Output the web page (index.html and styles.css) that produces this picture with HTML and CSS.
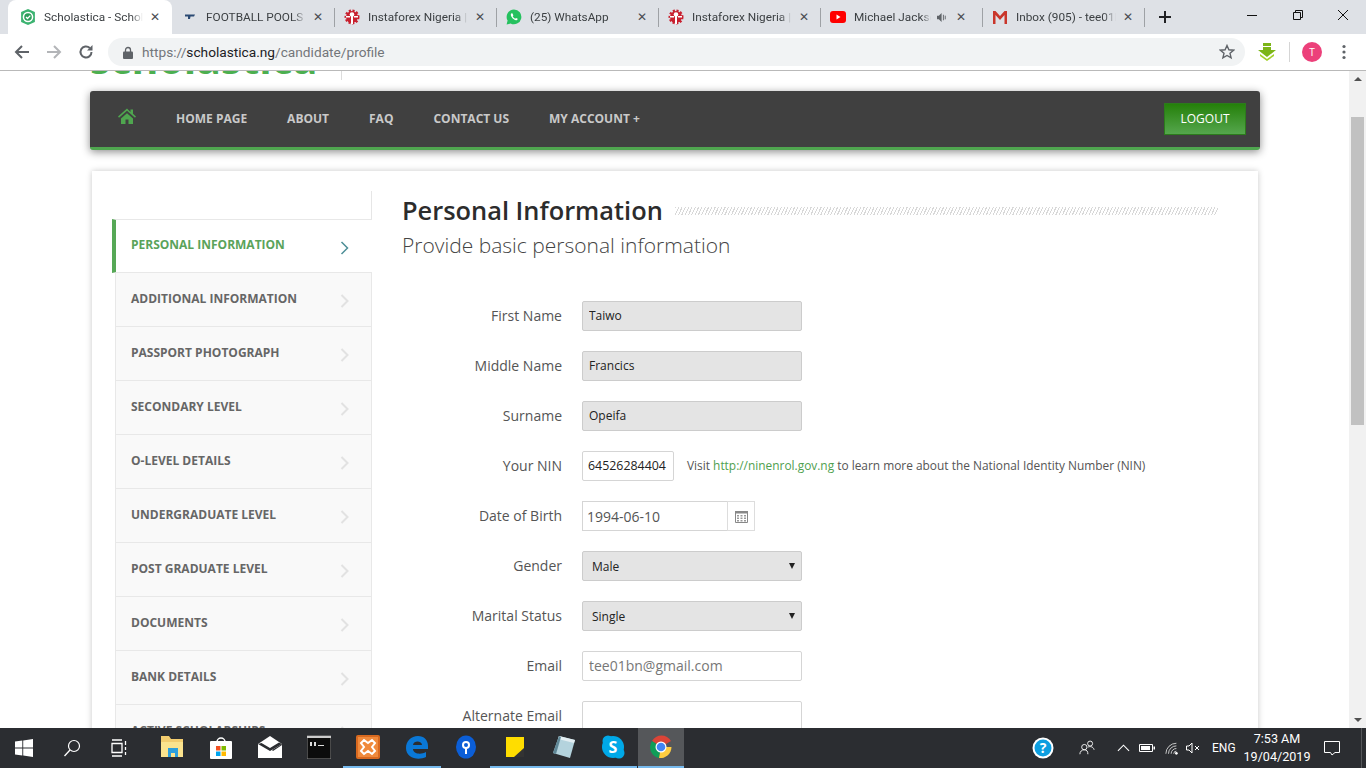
FILE: index.html
```html
<!DOCTYPE html>
<html lang="en">
<head>
<meta charset="utf-8">
<title>Scholastica - Scholarship Portal</title>
<link rel="stylesheet" href="styles.css">
</head>
<body>
<div class="tabstrip">
  <div class="tab active">
    <svg class="fav" viewBox="0 0 16 16"><path d="M8 0l6.900 3v10L8 16l-6.900-3V3z" fill="#3cb371"/><circle cx="8" cy="8" r="5.300" fill="#fff"/><circle cx="8" cy="8" r="3.800" fill="#2e9e5b"/><path d="M6 8l1.500 1.500L10.300 6.600" fill="none" stroke="#fff" stroke-width="1.300"/></svg>
    <span class="tab-title">Scholastica - Scholarship</span><span class="tab-x">✕</span>
  </div>
  <div class="tab">
    <svg class="fav" viewBox="0 0 16 16"><path d="M3 5.500h10l-1 2H8.500L8 10H6V7.500H3z" fill="#2b4a73"/></svg>
    <span class="tab-title">FOOTBALL POOLS FIXTURES</span><span class="tab-x">✕</span>
  </div>
  <div class="tab sep">
    <svg class="fav" viewBox="0 0 16 16"><circle cx="8" cy="8" r="6" fill="#c8202f" stroke="#c8202f" stroke-width="3" stroke-dasharray="2 1.500"/><circle cx="8" cy="5.500" r="2.300" fill="#fff"/><path d="M7 7h2v8H7zM2 7h4v1.600H2zM10 7h4v1.600h-4z" fill="#fff"/></svg>
    <span class="tab-title">Instaforex Nigeria | Forex</span><span class="tab-x">✕</span>
  </div>
  <div class="tab sep">
    <svg class="fav" viewBox="0 0 16 16"><path d="M8 .500a7.400 7.400 0 0 0-6.400 11.100L.600 15.500l4-1A7.400 7.400 0 1 0 8 .500z" fill="#25c15f"/><path d="M5.500 4.300c-1 .700-1 2.200.300 4 1.300 1.900 3.300 3.200 4.700 2.900.800-.200 1.300-.800 1.200-1.400l-1.700-.900-.800.800c-1-.400-2-1.400-2.500-2.500l.700-.800-.800-1.800z" fill="#fff"/></svg>
    <span class="tab-title">(25) WhatsApp</span><span class="tab-x">✕</span>
  </div>
  <div class="tab sep">
    <svg class="fav" viewBox="0 0 16 16"><circle cx="8" cy="8" r="6" fill="#c8202f" stroke="#c8202f" stroke-width="3" stroke-dasharray="2 1.500"/><circle cx="8" cy="5.500" r="2.300" fill="#fff"/><path d="M7 7h2v8H7zM2 7h4v1.600H2zM10 7h4v1.600h-4z" fill="#fff"/></svg>
    <span class="tab-title">Instaforex Nigeria | Forex</span><span class="tab-x">✕</span>
  </div>
  <div class="tab sep">
    <svg class="fav" viewBox="0 0 16 16"><rect y="2" width="16" height="12" rx="3" fill="#f00"/><path d="M6.500 5.500v5l4-2.500z" fill="#fff"/></svg>
    <span class="tab-title short">Michael Jackson - Thriller</span>
    <svg class="speaker" viewBox="0 0 12 12"><path d="M0 4h2l3-3v10L2 8H0z" fill="#5f6368"/><path d="M7 3v6M9 4v4" stroke="#5f6368" fill="none"/></svg>
    <span class="tab-x">✕</span>
  </div>
  <div class="tab sep">
    <svg class="fav" viewBox="0 0 16 16"><path d="M1 2h2.500L8 7l4.500-5H15v13h-2.500V6L8 11 3.500 6v9H1z" fill="#c9362b"/></svg>
    <span class="tab-title">Inbox (905) - tee01bn@gmail</span><span class="tab-x">✕</span>
  </div>
  <div class="tab-end">
    <svg class="newtab" viewBox="0 0 14 14"><path d="M7 1v12M1 7h12" stroke="#202124" stroke-width="2"/></svg>
  </div>
  <div class="winctl">
    <svg viewBox="0 0 12 12"><path d="M1 6.500h10" stroke="#111"/></svg>
    <svg viewBox="0 0 12 12"><path d="M1.500 3.500h7v7h-7zM3.500 3.500v-2h7v7h-2" fill="none" stroke="#111"/></svg>
    <svg viewBox="0 0 12 12"><path d="M1 1l10 10M11 1L1 11" stroke="#111"/></svg>
  </div>
</div>

<div class="toolbar">
  <svg class="tool" viewBox="0 0 16 16"><path d="M15 8H2.500M8 2L2 8l6 6" fill="none" stroke="#5f6368" stroke-width="2"/></svg>
  <svg class="tool" viewBox="0 0 16 16"><path d="M1 8h12.500M8 2l6 6-6 6" fill="none" stroke="#b3b5b8" stroke-width="2"/></svg>
  <svg class="tool" viewBox="0 0 16 16"><path d="M13.500 8a5.500 5.500 0 1 1-1.700-4" fill="none" stroke="#5f6368" stroke-width="2"/><path d="M14.500 1v5.500H9z" fill="#5f6368"/></svg>
  <div class="omnibox">
    <svg class="lock" viewBox="0 0 10 13"><path d="M2.500 6V4a2.500 2.500 0 0 1 5 0v2" fill="none" stroke="#5f6368" stroke-width="1.300"/><rect y="5.500" width="10" height="7.500" rx="1" fill="#5f6368"/></svg>
    <span class="url"><span class="url-dim">https://</span>scholastica.ng<span class="url-dim">/candidate/profile</span></span>
    <svg class="star" viewBox="0 0 16 16"><path d="M8 1.500l1.900 4.300 4.700.400-3.600 3.100 1.100 4.600L8 11.500l-4.100 2.400L5 9.300 1.400 6.200l4.700-.400z" fill="none" stroke="#5f6368" stroke-width="1.400"/></svg>
  </div>
  <div class="ext">
    <svg class="ext-arrow" viewBox="0 0 18 18"><path d="M5 0h8v3H5zM5 4h8v3h5l-9 7-9-7h5z" fill="#7cb518"/><path d="M2 11l7 5 7-5v2l-7 5-7-5z" fill="#a3d129"/></svg>
    <i class="ext-sep"></i>
    <span class="avatar">T</span>
    <svg class="dots" viewBox="0 0 4 16"><circle cx="2" cy="2.500" r="1.600"/><circle cx="2" cy="8" r="1.600"/><circle cx="2" cy="13.500" r="1.600"/></svg>
  </div>
</div>

<div class="viewport">
  <div class="page">
    <div class="site-head">
      <div class="logo">scholastica</div>
      <i class="logo-sep"></i>
    </div>
    <nav class="mainnav">
      <svg class="home" viewBox="0 0 18 16"><path d="M9 .500L0 8.500l1 1.200L9 2.800l8 6.900 1-1.200-3-2.700V1.500h-2.500v2.500zM3 10.500V16h4.500v-4.500h3V16H15v-5.500L9 5.200z" fill="#4fa64f"/></svg>
      <a>HOME PAGE</a><a>ABOUT</a><a>FAQ</a><a>CONTACT US</a><a>MY ACCOUNT +</a>
      <button class="logout">LOGOUT</button>
    </nav>
    <div class="card">
      <aside class="side">
        <div class="side-top"></div>
        <div class="side-item on">PERSONAL INFORMATION<svg class="chev" viewBox="0 0 10 14"><path d="M1.500 1l6 6-6 6" fill="none" stroke="#4e8f97" stroke-width="1.500"/></svg></div>
        <div class="side-item">ADDITIONAL INFORMATION<svg class="chev" viewBox="0 0 10 14"><path d="M1.500 1l6 6-6 6" fill="none" stroke="#e2e2e2" stroke-width="2"/></svg></div>
        <div class="side-item">PASSPORT PHOTOGRAPH<svg class="chev" viewBox="0 0 10 14"><path d="M1.500 1l6 6-6 6" fill="none" stroke="#e2e2e2" stroke-width="2"/></svg></div>
        <div class="side-item">SECONDARY LEVEL<svg class="chev" viewBox="0 0 10 14"><path d="M1.500 1l6 6-6 6" fill="none" stroke="#e2e2e2" stroke-width="2"/></svg></div>
        <div class="side-item">O-LEVEL DETAILS<svg class="chev" viewBox="0 0 10 14"><path d="M1.500 1l6 6-6 6" fill="none" stroke="#e2e2e2" stroke-width="2"/></svg></div>
        <div class="side-item">UNDERGRADUATE LEVEL<svg class="chev" viewBox="0 0 10 14"><path d="M1.500 1l6 6-6 6" fill="none" stroke="#e2e2e2" stroke-width="2"/></svg></div>
        <div class="side-item">POST GRADUATE LEVEL<svg class="chev" viewBox="0 0 10 14"><path d="M1.500 1l6 6-6 6" fill="none" stroke="#e2e2e2" stroke-width="2"/></svg></div>
        <div class="side-item">DOCUMENTS<svg class="chev" viewBox="0 0 10 14"><path d="M1.500 1l6 6-6 6" fill="none" stroke="#e2e2e2" stroke-width="2"/></svg></div>
        <div class="side-item">BANK DETAILS<svg class="chev" viewBox="0 0 10 14"><path d="M1.500 1l6 6-6 6" fill="none" stroke="#e2e2e2" stroke-width="2"/></svg></div>
        <div class="side-item">ACTIVE SCHOLARSHIPS<svg class="chev" viewBox="0 0 10 14"><path d="M1.500 1l6 6-6 6" fill="none" stroke="#e2e2e2" stroke-width="2"/></svg></div>
      </aside>
      <main class="main">
        <div class="title-row"><h1>Personal Information</h1><i class="hatch"></i></div>
        <p class="sub">Provide basic personal information</p>
        <form class="form">
          <div class="row"><label>First Name</label><input class="in ro" value="Taiwo" disabled></div>
          <div class="row"><label>Middle Name</label><input class="in ro" value="Francics" disabled></div>
          <div class="row"><label>Surname</label><input class="in ro" value="Opeifa" disabled></div>
          <div class="row"><label>Your NIN</label><input class="in nin" value="64526284404"><span class="help">Visit <a>http://ninenrol.gov.ng</a> to learn more about the National Identity Number (NIN)</span></div>
          <div class="row"><label>Date of Birth</label><div class="dategroup"><input class="in date" value="1994-06-10"><span class="addon"><svg viewBox="0 0 13 14"><path d="M.500 2.500h12v11H.500z" fill="#fff" stroke="#888"/><path d="M0 2h13v2.500H0z" fill="#888"/><path d="M2 6h2v1.500H2zM5.500 6h2v1.500h-2zM9 6h2v1.500H9zM2 8.500h2V10H2zM5.500 8.500h2V10h-2zM9 8.500h2V10H9zM2 11h2v1.500H2zM5.500 11h2v1.500h-2zM9 11h2v1.500H9z" fill="#999"/></svg></span></div></div>
          <div class="row"><label>Gender</label><div class="sel">Male</div></div>
          <div class="row"><label>Marital Status</label><div class="sel">Single</div></div>
          <div class="row"><label>Email</label><input class="in mail" value="tee01bn@gmail.com"></div>
          <div class="row"><label>Alternate Email</label><input class="in mail"></div>
        </form>
      </main>
    </div>
  </div>
  <div class="scrollbar">
    <span class="sb-up"></span>
    <div class="sb-track"><div class="sb-thumb"></div></div>
    <span class="sb-down"></span>
  </div>
</div>

<footer class="taskbar">
  <div class="tb-btn"><svg class="i20" viewBox="0 0 16 16"><path d="M0 2.300l6.500-.900v6.200H0zM7.300 1.300L16 0v7.600H7.300zM0 8.400h6.500v6.200L0 13.700zM7.300 8.400H16V16l-8.700-1.300z" fill="#fff"/></svg></div>
  <div class="tb-btn"><svg class="i20" viewBox="0 0 18 18"><circle cx="11" cy="7" r="5.500" fill="none" stroke="#fff" stroke-width="1.200"/><path d="M7 11l-5.500 6" stroke="#fff" stroke-width="1.300"/></svg></div>
  <div class="tb-btn"><svg class="i20" viewBox="0 0 18 18"><path d="M1 4.500h10v9H1zM1 1h10M1 17h10M14.500 2v4M14.500 8v3M14.500 13v3" fill="none" stroke="#fff" stroke-width="1.300"/></svg></div>
  <div class="tb-app pad"><svg class="i24" viewBox="0 0 24 24"><path d="M1 1h8l2 3h12v18H1z" fill="#f3cd6f"/><path d="M1 7h22v15H1z" fill="#fbe38e"/><path d="M8 13h10v9h-3v-4h-4v4H8z" fill="#2d9fdc"/></svg></div>
  <div class="tb-app"><svg class="i24" viewBox="0 0 24 24"><path d="M8 7a4 4 0 0 1 8 0" fill="none" stroke="#fff" stroke-width="1.500"/><rect x="1" y="6" width="22" height="18" rx="1" fill="#fff"/><path d="M7 11h4.500v4.500H7z" fill="#f25022"/><path d="M12.500 11H17v4.500h-4.500z" fill="#7fba00"/><path d="M7 16.500h4.500V21H7z" fill="#00a4ef"/><path d="M12.500 16.500H17V21h-4.500z" fill="#ffb900"/></svg></div>
  <div class="tb-app"><svg class="i24" viewBox="0 0 24 24"><path d="M12 1L0 9v14h24V9z" fill="#fff"/><path d="M0 9l12 7 12-7-3-1.500L12 13 3.500 8z" fill="#2b2d31"/><path d="M14 15l10-6v1l-9 6z" fill="#2b2d31"/></svg></div>
  <div class="tb-app"><svg class="i24" viewBox="0 0 24 24"><rect y="1" width="24" height="23" fill="#0c0c0c" stroke="#888"/><path d="M0 1h24v2H0z" fill="#ccc"/><path d="M3 7h2v4H3zM7 7h2v4H7zM11 10h6v1h-6z" fill="#ddd"/></svg></div>
  <div class="tb-app run"><svg class="i24" viewBox="0 0 24 24"><rect width="24" height="24" rx="2" fill="#d9691f"/><rect x="2" y="2" width="20" height="20" fill="#f08a3c"/><path d="M8 5l4 3 4-3 3 3-3 4 3 4-3 3-4-3-4 3-3-3 3-4-3-4z" fill="none" stroke="#fff" stroke-width="2"/></svg></div>
  <div class="tb-app run"><svg class="i24" viewBox="0 0 24 24"><path d="M1 13C1 6 6 1 13 1c6 0 10 4 10 10v3H8c0 5 8 6 13 3v5c-8 4-20 1-20-9zm7-3h9c0-4-8-5-9 0z" fill="#0a78d7"/></svg></div>
  <div class="tb-app"><svg class="i24" viewBox="0 0 24 24"><ellipse cx="12" cy="12" rx="10" ry="11.500" fill="#0b5ed7"/><circle cx="12" cy="10" r="4" fill="#fff"/><circle cx="12" cy="10" r="2" fill="#0b5ed7"/><path d="M11 13h2v6h-2z" fill="#fff"/></svg></div>
  <div class="tb-app run"><svg class="i24" viewBox="0 0 24 24"><path d="M3 2h18v20H3z" fill="#ffdd00"/><path d="M21 13v9H11z" fill="#333"/></svg></div>
  <div class="tb-app run"><svg class="i24" viewBox="0 0 24 24"><path d="M7 1l16 4-5 18-17-5z" fill="#b4d3dd"/><path d="M7 1l16 4-1 3L6 4z" fill="#e3eef2"/><path d="M1 18l6-17 2 1-5 17z" fill="#5f8796"/></svg></div>
  <div class="tb-app run"><svg class="i24" viewBox="0 0 24 24"><circle cx="12" cy="12" r="11" fill="#00a9e8"/><circle cx="7" cy="6" r="5.500" fill="#00a9e8"/><circle cx="18" cy="18" r="5.500" fill="#00a9e8"/><text x="12" y="18" class="skype">S</text></svg></div>
  <div class="tb-app chrome"><svg class="i24" viewBox="0 0 24 24"><path d="M12 12L3 6a11 11 0 0 1 19 0z" fill="#db4437"/><path d="M12 12L3 6a11 11 0 0 0 7 17z" fill="#0f9d58"/><path d="M12 12h10.500A11 11 0 0 1 10 23z" fill="#ffcd40"/><circle cx="12" cy="12" r="5.500" fill="#fff"/><circle cx="12" cy="12" r="4.300" fill="#4285f4"/></svg></div>
  <div class="tray">
    <svg class="help-ico" viewBox="0 0 22 22"><circle cx="11" cy="11" r="10.500" fill="#fff"/><circle cx="11" cy="11" r="8.500" fill="#0d9ee0"/><text x="11" y="16" class="q">?</text></svg>
    <svg class="people" viewBox="0 0 18 18"><circle cx="6" cy="8" r="3" fill="none" stroke="#fff"/><path d="M1 16c0-3 2-5 5-5s4 2 4 5" fill="none" stroke="#fff"/><circle cx="12.500" cy="4" r="2.800" fill="none" stroke="#fff"/><path d="M10 8c2-1 6-1 7 3" fill="none" stroke="#fff"/></svg>
    <svg class="chevup" viewBox="0 0 14 8"><path d="M1 7l6-6 6 6" fill="none" stroke="#fff" stroke-width="1.200"/></svg>
    <svg class="batt" viewBox="0 0 16 10"><path d="M.500 1.500h13v7H.500z" fill="none" stroke="#fff"/><path d="M2 3h9v4H2z" fill="#fff"/><path d="M14.500 3.500H16v3h-1.500z" fill="#fff"/></svg>
    <svg class="wifi" viewBox="0 0 16 14"><path d="M1 13A12 12 0 0 1 13 1M4 13a9 9 0 0 1 9-9M7 13a6 6 0 0 1 6-6M10 13a3 3 0 0 1 3-3" fill="none" stroke="#ddd"/><circle cx="13" cy="12.500" r="1.500" fill="#fff"/></svg>
    <svg class="vol" viewBox="0 0 16 12"><path d="M.500 4h2.500l3-3v10L3 8H.500z" fill="none" stroke="#fff"/><path d="M9 4l4 4M13 4l-4 4" stroke="#fff"/></svg>
    <span class="lang">ENG</span>
    <div class="clock"><span>7:53 AM</span><span>19/04/2019</span></div>
    <svg class="notif" viewBox="0 0 16 16"><path d="M.500 1.500h15v11h-4.500l-3 2.500-1.500-2.500h-6z" fill="none" stroke="#fff"/></svg>
    <i class="show-desk"></i>
  </div>
</footer>
</body>
</html>
```

FILE: styles.css
```css
* { box-sizing: border-box; }
html, body { margin: 0; height: 100%; }
body {
  width: 1366px;
  height: 768px;
  overflow: hidden;
  display: flex;
  flex-direction: column;
  font-family: "Open Sans", "Liberation Sans", sans-serif;
  background: #fff;
}

/* browser tabs */
.tabstrip {
  height: 34px;
  flex: none;
  display: flex;
  align-items: center;
  padding-left: 10px;
  background: #dee1e6;
  font-family: Roboto, "Liberation Sans", sans-serif;
  font-size: 12px;
  color: #3c4043;
}
.tab {
  width: 162px;
  height: 34px;
  flex: none;
  display: flex;
  align-items: center;
  padding-left: 10px;
  position: relative;
}
.tab.sep::before {
  content: "";
  position: absolute;
  left: 0;
  top: 8px;
  height: 19px;
  width: 1px;
  background: #9ea1a5;
}
.tab.active {
  background: #fff;
  border-radius: 8px 8px 0 0;
  margin-left: -2px;
  width: 164px;
  padding-left: 12px;
}
.fav { width: 16px; height: 16px; flex: none; }
.tab-title {
  margin-left: 8px;
  width: 100px;
  flex: none;
  white-space: nowrap;
  overflow: hidden;
  font-size: 11.800px;
  -webkit-mask-image: linear-gradient(to right, #000 88%, transparent);
  mask-image: linear-gradient(to right, #000 88%, transparent);
}
.tab.active .tab-title { width: 99px; }
.tab-title.short { width: 77px; }
.speaker { width: 11px; height: 11px; margin-left: 6px; flex: none; }
.tab-x {
  margin-left: 6px;
  width: 12px;
  text-align: center;
  font-size: 12px;
  color: #494c50;
  font-family: "DejaVu Sans", sans-serif;
}
.speaker + .tab-x { margin-left: 7px; }
.tab-end { width: 40px; display: flex; justify-content: center; border-left: 1px solid #9ea1a5; height: 19px; align-items: center; }
.newtab { width: 14px; height: 14px; }
.winctl {
  margin-left: auto;
  width: 120px;
  display: flex;
  justify-content: space-between;
  padding: 0 17px 4px 0;
}
.winctl svg { width: 12px; height: 12px; }

/* toolbar */
.toolbar {
  height: 37px;
  flex: none;
  display: flex;
  align-items: flex-start;
  padding: 4px 0 0 14px;
  border-bottom: 1px solid #b9b9b9;
  background: #fff;
}
.tool { width: 16px; height: 16px; margin: 6px 16px 0 0; flex: none; }
.omnibox {
  margin-left: -2px;
  width: 1137px;
  height: 28px;
  flex: none;
  border-radius: 14px;
  background: #f1f3f4;
  display: flex;
  align-items: center;
  padding: 0 10px 0 15px;
  font-family: Roboto, "Liberation Sans", sans-serif;
  font-size: 13.700px;
  color: #202124;
}
.lock { width: 10px; height: 13px; flex: none; }
.url { margin-left: 9px; }
.url-dim { color: #73767a; }
.star { width: 16px; height: 16px; margin-left: auto; }
.ext { display: flex; align-items: center; height: 28px; flex: none; }
.ext-arrow { width: 18px; height: 18px; margin-left: 13px; }
.ext-sep { width: 1px; height: 20px; background: #d5d5d5; margin-left: 13px; }
.avatar {
  width: 20px;
  height: 20px;
  border-radius: 50%;
  margin-left: 12px;
  background: #ec407a;
  color: #fff;
  font-size: 10px;
  text-align: center;
  line-height: 20px;
}
.dots { width: 4px; height: 16px; margin-left: 20px; fill: #5f6368; }

/* page */
.viewport { flex: 1; min-height: 0; display: flex; overflow: hidden; }
.page { flex: 1; min-width: 0; padding-left: 90px; overflow: hidden; }
.site-head { height: 20px; overflow: hidden; display: flex; align-items: flex-start; }
.logo {
  width: 251px;
  margin-top: -38px;
  font-size: 41px;
  line-height: 50px;
  font-weight: 700;
  color: #4caf50;
  white-space: nowrap;
}
.logo-sep { width: 1px; height: 9px; background: #dcdcdc; }
.mainnav {
  width: 1170px;
  height: 59px;
  display: flex;
  align-items: center;
  gap: 40px;
  padding: 0 14px 2px 28px;
  border-bottom: 3px solid #4fa64f;
  border-radius: 3px;
  background: #404040;
  box-shadow: 0 2px 8px rgba(0, 0, 0, .45);
  font-size: 12px;
  font-weight: 700;
  color: #c9c9c9;
}
.home { width: 18px; height: 16px; flex: none; margin-top: -4px; }
.mainnav a { white-space: nowrap; }
.logout {
  margin: 2px 0 0 auto;
  width: 82px;
  height: 32px;
  padding: 0 0 1px;
  border: 1px solid #2c7b1c;
  background: linear-gradient(#25800a, #55a64d);
  color: #fff;
  font: 400 12px "Open Sans", sans-serif;
}
.card {
  width: 1166px;
  margin: 21px 0 0 2px;
  padding: 20px 40px 0 20px;
  display: flex;
  gap: 30px;
  background: #fff;
  box-shadow: 0 0 6px rgba(0, 0, 0, .22);
}

/* side menu */
.side { width: 260px; flex: none; }
.side-top { height: 28px; border-right: 1px solid #e6e6e6; }
.side-item {
  height: 54px;
  margin-left: 3px;
  padding: 0 0 3px 15px;
  display: flex;
  align-items: center;
  position: relative;
  border: 1px solid #e8e8e8;
  border-top: 0;
  background: #f9f9f9;
  font-size: 12px;
  font-weight: 700;
  color: #666;
}
.side-item.on {
  margin-left: 0;
  padding-left: 15px;
  border-left: 4px solid #56a856;
  border-right: 0;
  border-top: 1px solid #e8e8e8;
  background: #fff;
  color: #5aa35a;
}
.chev { position: absolute; right: 21px; top: 21px; width: 10px; height: 14px; }
.on .chev { right: 22px; }

/* form */
.main { flex: 1; min-width: 0; }
.title-row { display: flex; align-items: center; gap: 12px; height: 36px; margin-top: 1px; }
h1 { margin: 0; font-size: 25.400px; line-height: 36px; font-weight: 600; color: #2c2c2c; white-space: nowrap; }
.hatch {
  flex: 1;
  height: 8px;
  margin-top: 2px;
  background: repeating-linear-gradient(115deg, #d8d8d8 0 1px, #fff 1px 3px);
}
.sub { margin: 2px 0 0; font-size: 21px; line-height: 30px; font-weight: 300; color: #444; }
.form { margin-top: 41px; }
.row { height: 30px; margin-bottom: 20px; display: flex; align-items: center; }
.row label { width: 160px; margin-right: 20px; padding-bottom: 2px; flex: none; text-align: right; font-size: 14px; color: #555; }
.in {
  width: 220px;
  height: 30px;
  padding: 0 6px 2px;
  border: 1px solid #d5d5d5;
  border-radius: 2px;
  background: #fff;
  font: 12px "Open Sans", sans-serif;
  color: #222;
}
.in.ro { background: #e4e4e4; border-color: #ccc; }
.in.nin { width: 92px; padding: 0 5px 2px; font-size: 12.400px; }
.in.mail { color: #777; font-size: 14px; }
.help { margin-left: 13px; padding-bottom: 2px; font-size: 11.900px; color: #555; white-space: nowrap; }
.help a { color: #4fa04f; }
.dategroup { display: flex; }
.in.date { width: 145px; padding: 0 4px; border-radius: 0; border-right: 0; font-size: 14px; color: #555; }
.addon {
  width: 28px;
  height: 30px;
  display: flex;
  align-items: center;
  justify-content: center;
  border: 1px solid #ddd;
}
.addon svg { width: 13px; height: 14px; }
.sel {
  width: 220px;
  height: 30px;
  padding: 0 9px;
  display: flex;
  align-items: center;
  position: relative;
  border: 1px solid #ccc;
  border-radius: 2px;
  background: #e4e4e4;
  font-size: 12px;
  color: #222;
}
.sel::after {
  content: "";
  position: absolute;
  right: 6px;
  top: 11px;
  border-left: 3.500px solid transparent;
  border-right: 3.500px solid transparent;
  border-top: 6px solid #222;
}

/* scrollbar */
.scrollbar { width: 17px; flex: none; display: flex; flex-direction: column; align-items: center; background: #f1f1f1; }
.sb-up, .sb-down { height: 17px; flex: none; width: 0; margin-top: 6px; border-left: 4px solid transparent; border-right: 4px solid transparent; }
.sb-up { border-bottom: 4px solid #505050; height: 0; }
.sb-track { flex: 1; width: 100%; padding: 36px 2px 0; }
.sb-thumb { height: 308px; background: #c1c1c1; }
.sb-down { border-top: 4px solid #505050; height: 0; margin: 0 0 6px; }

/* taskbar */
.taskbar {
  height: 40px;
  flex: none;
  display: flex;
  align-items: center;
  background: #2b2d31;
  color: #fff;
  font-family: Roboto, "Liberation Sans", sans-serif;
  font-size: 12px;
}
.tb-btn { width: 48px; height: 40px; flex: none; display: flex; align-items: center; justify-content: center; }
.tb-app {
  width: 49px;
  height: 40px;
  flex: none;
  display: flex;
  align-items: center;
  justify-content: center;
  border-bottom: 2px solid transparent;
  background-clip: padding-box;
}
.tb-app.pad { margin-left: 3px; }
.tb-app.run { border-bottom-color: #76b9ed; }
.tb-app.chrome { background: #55575a; border-bottom: 2px solid #76b9ed; width: 46px; margin-left: 1px; }
.i20 { width: 18px; height: 18px; }
.i24 { width: 24px; height: 24px; }
.skype { font: 700 16px "Open Sans", sans-serif; fill: #fff; text-anchor: middle; }
.tray { margin-left: auto; display: flex; align-items: center; height: 40px; }
.help-ico { width: 22px; height: 22px; margin-right: 25px; }
.q { font: 700 14px "Open Sans", sans-serif; fill: #fff; text-anchor: middle; }
.people { width: 16px; height: 16px; margin-right: 22px; }
.chevup { width: 13px; height: 8px; margin-right: 9px; }
.batt { width: 16px; height: 10px; margin-right: 10px; }
.wifi { width: 14px; height: 13px; margin-right: 7px; }
.vol { width: 16px; height: 12px; margin-right: 10px; }
.lang { width: 24px; margin-right: 7px; }
.clock { width: 68px; margin-right: 13px; display: flex; flex-direction: column; align-items: center; line-height: 18px; font-size: 12.600px; }
.notif { width: 16px; height: 16px; margin-right: 21px; }
.show-desk { width: 1px; height: 40px; background: #55575a; margin-right: 4px; }
```
